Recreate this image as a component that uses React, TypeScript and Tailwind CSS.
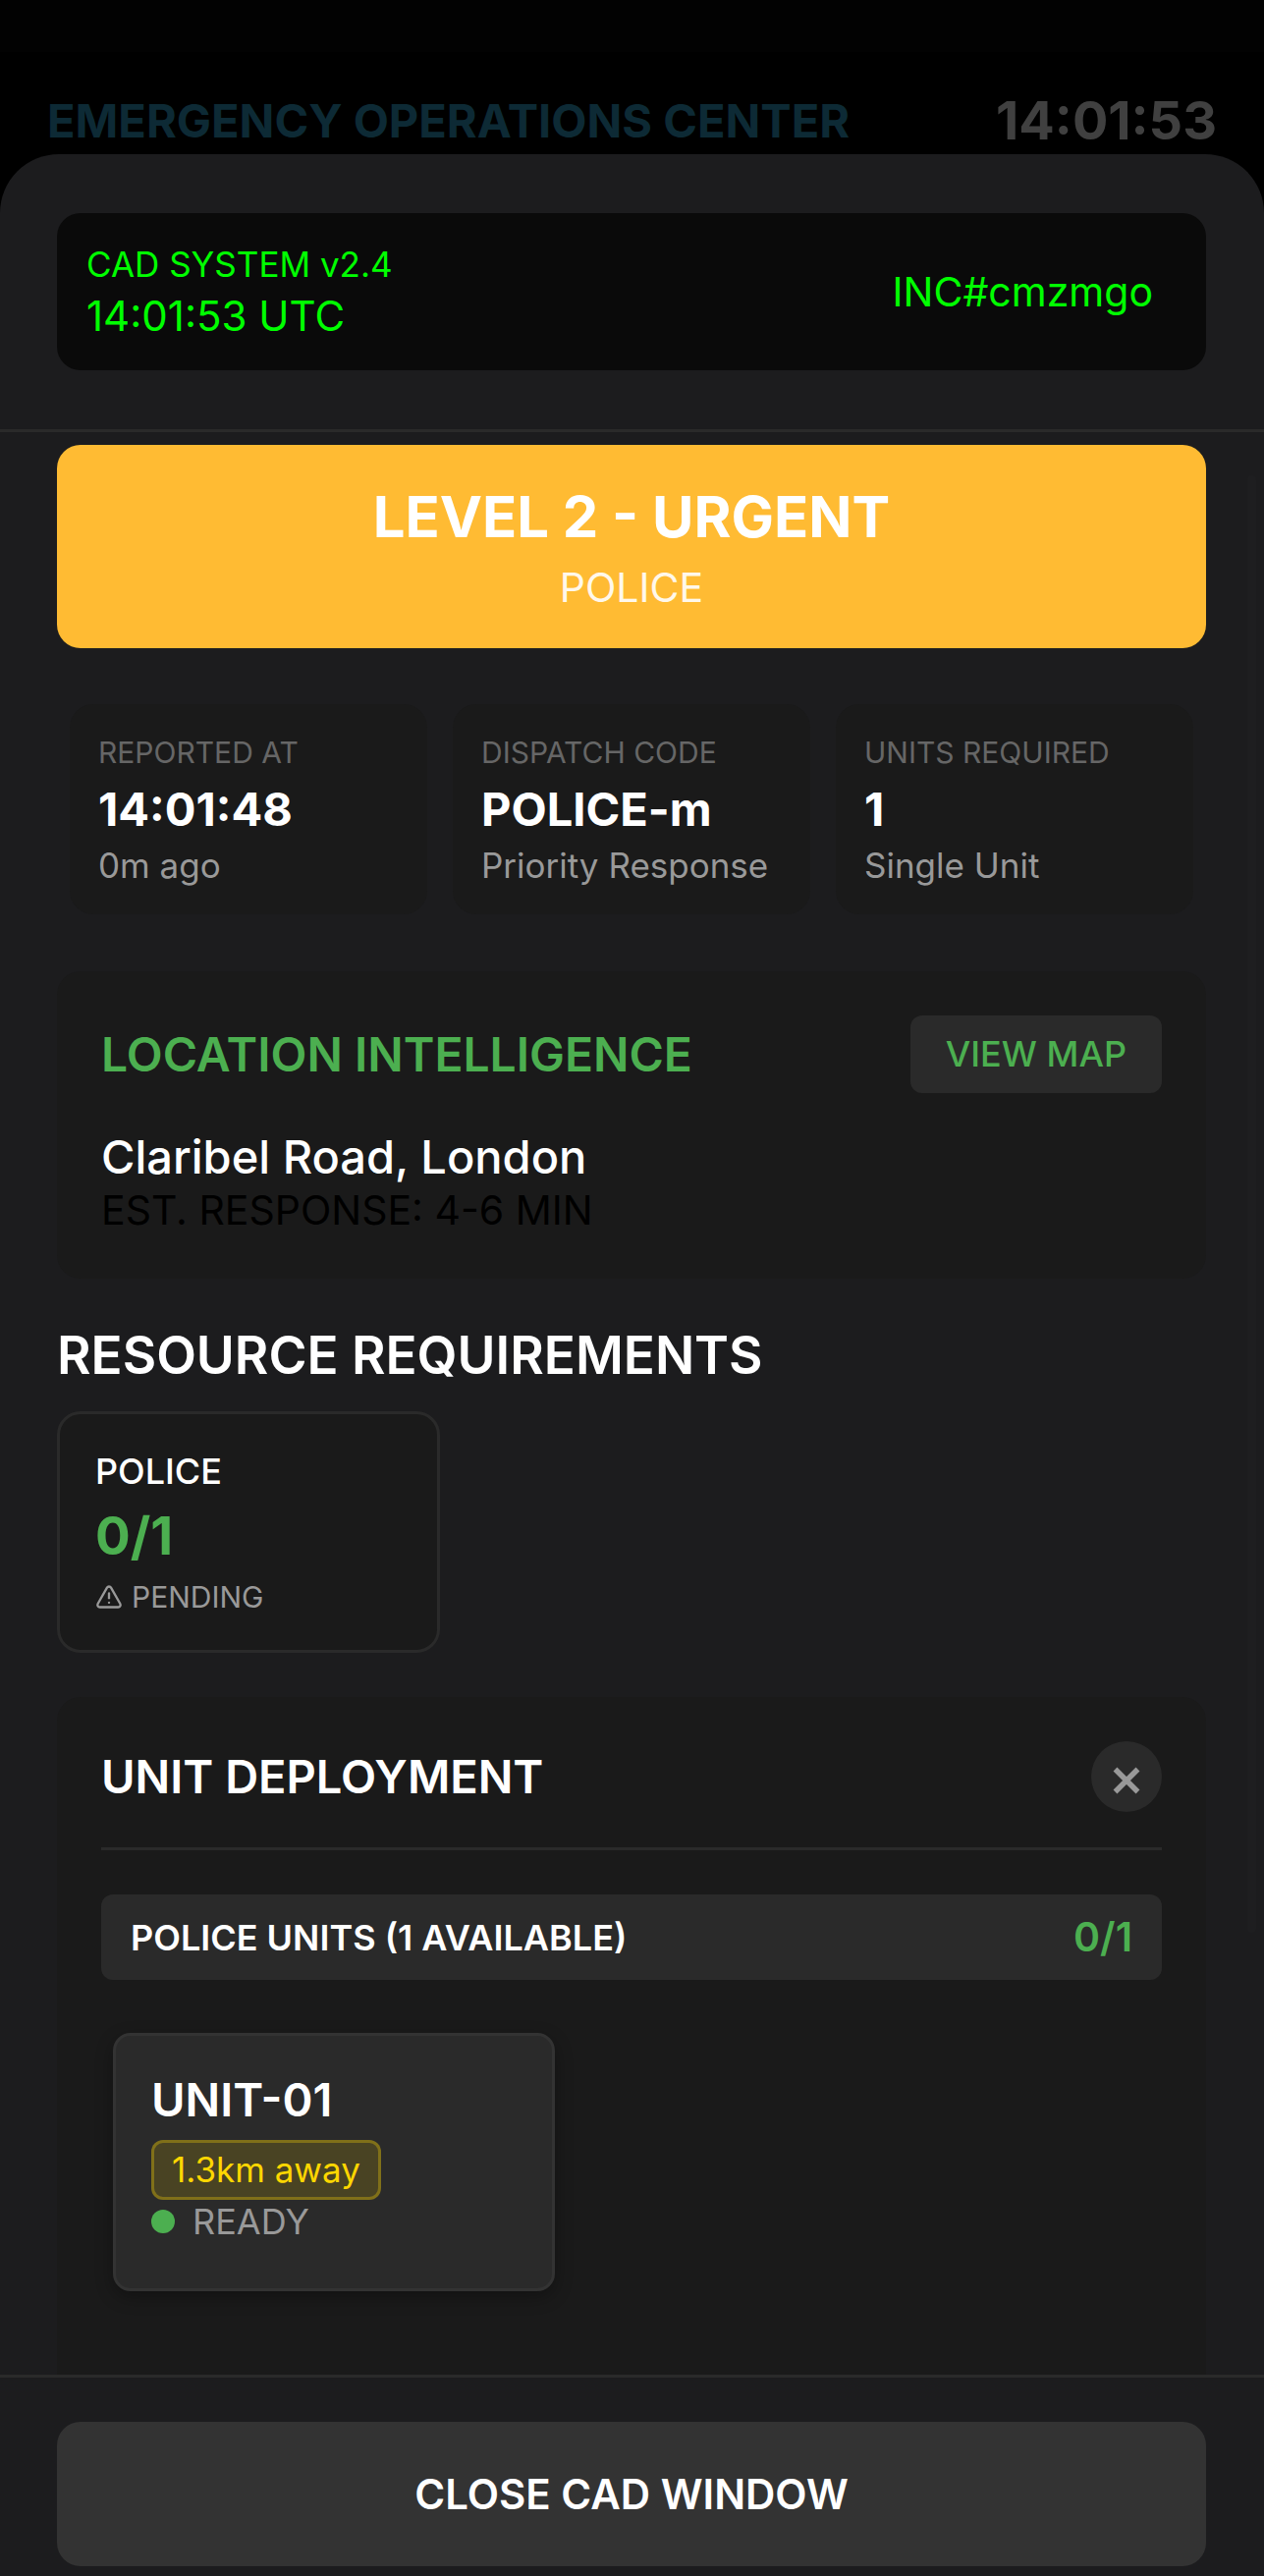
import { TriangleAlert } from "lucide-react";

type Fact = { label: string; value: string; note: string };

const facts: Fact[] = [
  { label: "REPORTED AT", value: "14:01:48", note: "0m ago" },
  { label: "DISPATCH CODE", value: "POLICE-m", note: "Priority Response" },
  { label: "UNITS REQUIRED", value: "1", note: "Single Unit" },
];

function FactCard({ label, value, note }: Fact) {
  return (
    <div className="flex-1 whitespace-nowrap rounded-3xl bg-[#1a1a1a] px-[29px] py-7">
      <dt className="text-[30px] leading-[42px] text-[#666666]">{label}</dt>
      <dd className="mt-2 text-[47px] leading-[58px] font-bold">{value}</dd>
      <dd className="mt-[6px] text-[35px] leading-[44px] text-[#999999]">{note}</dd>
    </div>
  );
}

function CadHeader() {
  return (
    <header className="border-b-[3px] border-[#2a2a2a] pr-[59px] pl-[58px] py-[60px]">
      <div className="flex items-center justify-between rounded-3xl bg-[#0a0a0a] p-[30px] text-[#00ff00]">
        <div>
          <p className="text-[35px] leading-[44px]">CAD SYSTEM v2.4</p>
          <p className="mt-[6px] text-[42px] leading-[50px]">14:01:53 UTC</p>
        </div>
        <p className="pr-6 text-[41px] leading-[50px]">INC#cmzmgo</p>
      </div>
    </header>
  );
}

function LocationPanel() {
  return (
    <section className="mt-[58px] rounded-3xl bg-[#1a1a1a] p-[45px]">
      <div className="flex items-center justify-between">
        <h2 className="text-[48px] leading-[58px] font-semibold text-[#4caf50]">LOCATION INTELLIGENCE</h2>
        <button
          type="button"
          className="rounded-xl bg-[#2a2a2a] px-9 py-[18px] text-[36px] leading-[43px] font-medium text-[#4caf50]"
        >
          VIEW MAP
        </button>
      </div>
      <p className="mt-9 text-[47px] leading-[58px] font-medium">Claribel Road, London</p>
      <p className="text-[41px] leading-[50px] text-black">EST. RESPONSE: 4-6 MIN</p>
    </section>
  );
}

function Resources() {
  return (
    <section className="mt-[45px]">
      <h2 className="text-[53px] leading-[66px] font-semibold">RESOURCE REQUIREMENTS</h2>
      <div className="mt-6 w-1/3 rounded-3xl border-[3px] border-[#2a2a2a] bg-[#1a1a1a] p-9">
        <h3 className="text-[36px] leading-[44px] font-medium">POLICE</h3>
        <p className="mt-3 text-[53px] leading-[64px] font-bold text-[#4caf50]">0/1</p>
        <p className="mt-3 flex items-center gap-[9px] text-[30px] leading-9 text-[#999999]">
          <TriangleAlert className="size-7" strokeWidth={2} />
          PENDING
        </p>
      </div>
    </section>
  );
}

function Deployment() {
  return (
    <section className="mt-[45px] flex-1 rounded-t-3xl bg-[#1a1a1a] p-[45px]">
      <div className="flex items-center justify-between border-b-[3px] border-[#2a2a2a] pb-9">
        <h2 className="text-[47px] leading-[58px] font-semibold">UNIT DEPLOYMENT</h2>
        <button
          type="button"
          aria-label="Close unit deployment"
          className="flex size-[72px] items-center justify-center rounded-full bg-[#2a2a2a] pt-2 text-[#999999]"
        >
          <svg viewBox="0 0 28 28" className="size-7" fill="none" stroke="currentColor" strokeWidth="5.5">
            <path d="M2.5 2.5 25.5 25.5M25.5 2.5 2.5 25.5" />
          </svg>
        </button>
      </div>
      <div className="mt-[45px] flex items-center justify-between rounded-xl bg-[#2a2a2a] px-[30px] py-[18px]">
        <h3 className="text-[36px] leading-[44px] font-semibold">POLICE UNITS (1 AVAILABLE)</h3>
        <span className="text-[41px] leading-[51px] font-semibold text-[#4caf50]">0/1</span>
      </div>
      <button
        type="button"
        className="mt-[54px] ml-3 flex w-[450px] max-w-full flex-col items-start rounded-[18px] border-[3px] border-[#333333] bg-[#2a2a2a] px-9 pt-9 pb-[46px] text-left shadow-[0_6px_18px_rgba(0,0,0,0.3)]"
      >
        <span className="text-[47px] leading-[58px] font-semibold">UNIT-01</span>
        <span className="mt-3 rounded-xl border-[3px] border-[#ffd700]/30 bg-[#ffd700]/15 px-[18px] py-[6px] text-[35px] leading-[43px] text-[#ffd700]">
          1.3km away
        </span>
        <span className="flex items-center gap-[18px] text-[36px] leading-[44px] text-[#999999]">
          <span className="size-6 rounded-full bg-[#4caf50]" />
          READY
        </span>
      </button>
    </section>
  );
}

export default function App() {
  return (
    <div className="flex h-screen flex-col bg-black font-['Inter',sans-serif] text-white">
      <div className="h-[53px] shrink-0 bg-[#020202]" />
      <div className="flex items-center justify-between px-12 pt-[43px] pb-[7px] font-bold whitespace-nowrap">
        <h1 className="text-[47px] leading-[54px] text-[#0d2a35]">EMERGENCY OPERATIONS CENTER</h1>
        <time className="text-[54px] leading-[54px] text-[#404040]">14:01:53</time>
      </div>

      <div role="dialog" aria-label="CAD window" className="flex min-h-0 flex-1 flex-col overflow-hidden rounded-t-[60px] bg-[#1c1c1e]">
        <CadHeader />

        <main className="relative flex min-h-0 flex-1 flex-col overflow-hidden pr-[59px] pl-[58px] pt-[13px]">
          <div className="rounded-3xl bg-[#ffbb33] px-9 pt-[38px] pb-[37px] text-center">
            <p className="text-[58px] leading-[70px] font-bold">LEVEL 2 - URGENT</p>
            <p className="mt-3 text-[41px] leading-[50px] text-white/90">POLICE</p>
          </div>
          <dl className="mx-[13px] mt-[57px] flex gap-[26px]">
            {facts.map((fact) => (
              <FactCard key={fact.label} {...fact} />
            ))}
          </dl>
          <LocationPanel />
          <Resources />
          <Deployment />
          <div className="absolute top-11 right-2 h-3/4 w-[9px] rounded-full bg-[#1e1e20]" />
        </main>

        <footer className="border-t-[3px] border-[#2a2a2a] pr-[59px] pl-[58px] pt-[45px] pb-[10px]">
          <button
            type="button"
            className="w-full rounded-3xl bg-[#333333] py-12 text-[42px] leading-[51px] font-semibold"
          >
            CLOSE CAD WINDOW
          </button>
        </footer>
      </div>
    </div>
  );
}
